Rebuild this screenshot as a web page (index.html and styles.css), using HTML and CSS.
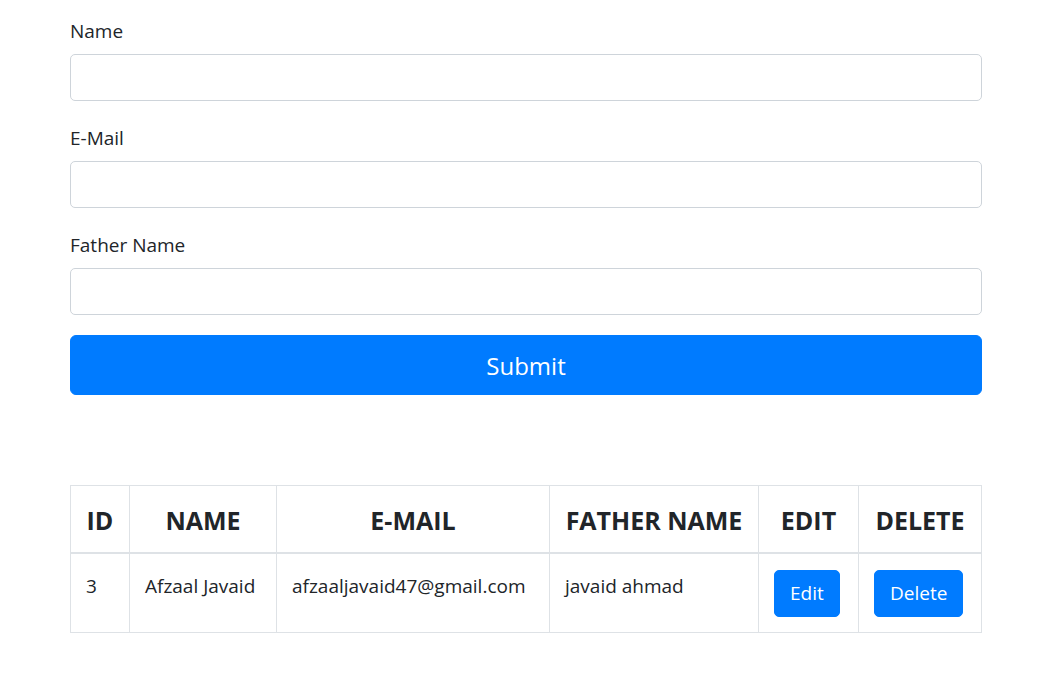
FILE: index.html
```html
<!DOCTYPE html>
<html>
<head>
<meta charset="utf-8">
<link rel="stylesheet" href="styles.css">
</head>
<body>
<div class="container">
  <form class="form">
    <div class="group">
      <label class="label">Name</label>
      <input class="input" type="text">
    </div>
    <div class="group">
      <label class="label">E-Mail</label>
      <input class="input" type="text">
    </div>
    <div class="group">
      <label class="label">Father Name</label>
      <input class="input" type="text">
    </div>
    <button class="btn btn-lg" type="button">Submit</button>
  </form>
  <table class="table">
    <colgroup>
      <col class="c-id"><col class="c-name"><col class="c-mail"><col class="c-father"><col class="c-edit"><col class="c-del">
    </colgroup>
    <thead>
      <tr><th>ID</th><th>NAME</th><th>E-MAIL</th><th>FATHER NAME</th><th>EDIT</th><th>DELETE</th></tr>
    </thead>
    <tbody>
      <tr>
        <td>3</td><td>Afzaal Javaid</td><td>afzaaljavaid47@gmail.com</td><td>javaid ahmad</td>
        <td><button class="btn" type="button">Edit</button></td>
        <td><button class="btn" type="button">Delete</button></td>
      </tr>
    </tbody>
  </table>
</div>
</body>
</html>
```
FILE: styles.css
```css
* { box-sizing: border-box; }
body {
  margin: 0;
  font-family: "Open Sans", "Noto Sans", sans-serif;
  font-size: 19px;
  line-height: 1.5;
  color: #212529;
  background: #fff;
}
.container {
  width: 912px;
  margin: 0 0 0 70px;
  padding-top: 14px;
}
.group { margin-bottom: 20px; }
.label {
  display: block;
  padding-top: 2px;
  margin-bottom: 8px;
  line-height: 30px;
}
.input {
  display: block;
  width: 100%;
  height: 47px;
  border: 1px solid #ced4da;
  border-radius: 5px;
  padding: 7px 15px;
  font: inherit;
  color: #495057;
  background: #fff;
}
.btn {
  display: inline-block;
  border: 1px solid #007bff;
  background: #007bff;
  color: #fff;
  font-family: inherit;
  font-size: 19px;
  line-height: 31px;
  padding: 7px 15px;
  border-radius: 5px;
}
.btn-lg {
  display: block;
  width: 100%;
  height: 60px;
  font-size: 24px;
  line-height: 36px;
  padding: 11px 20px 9px;
  border-radius: 6px;
}
.form { margin-bottom: 90px; }
.table {
  width: 911px;
  border-collapse: collapse;
  table-layout: fixed;
}
.c-id { width: 59px; }
.c-name { width: 147px; }
.c-mail { width: 273px; }
.c-father { width: 209px; }
.c-edit { width: 100px; }
.c-del { width: 123px; }
.table th, .table td {
  border: 1px solid #dee2e6;
  padding: 16px 15px 15px;
  vertical-align: top;
  text-align: left;
}
.table th {
  border-bottom: 2px solid #dee2e6;
  text-align: center;
  font-size: 25px;
  font-weight: 700;
  line-height: 36px;
  padding: 16px 10px 14px;
  white-space: nowrap;
}
.table td { line-height: 33px; white-space: nowrap; }
.table td .btn { line-height: 31px; vertical-align: top; }
```
